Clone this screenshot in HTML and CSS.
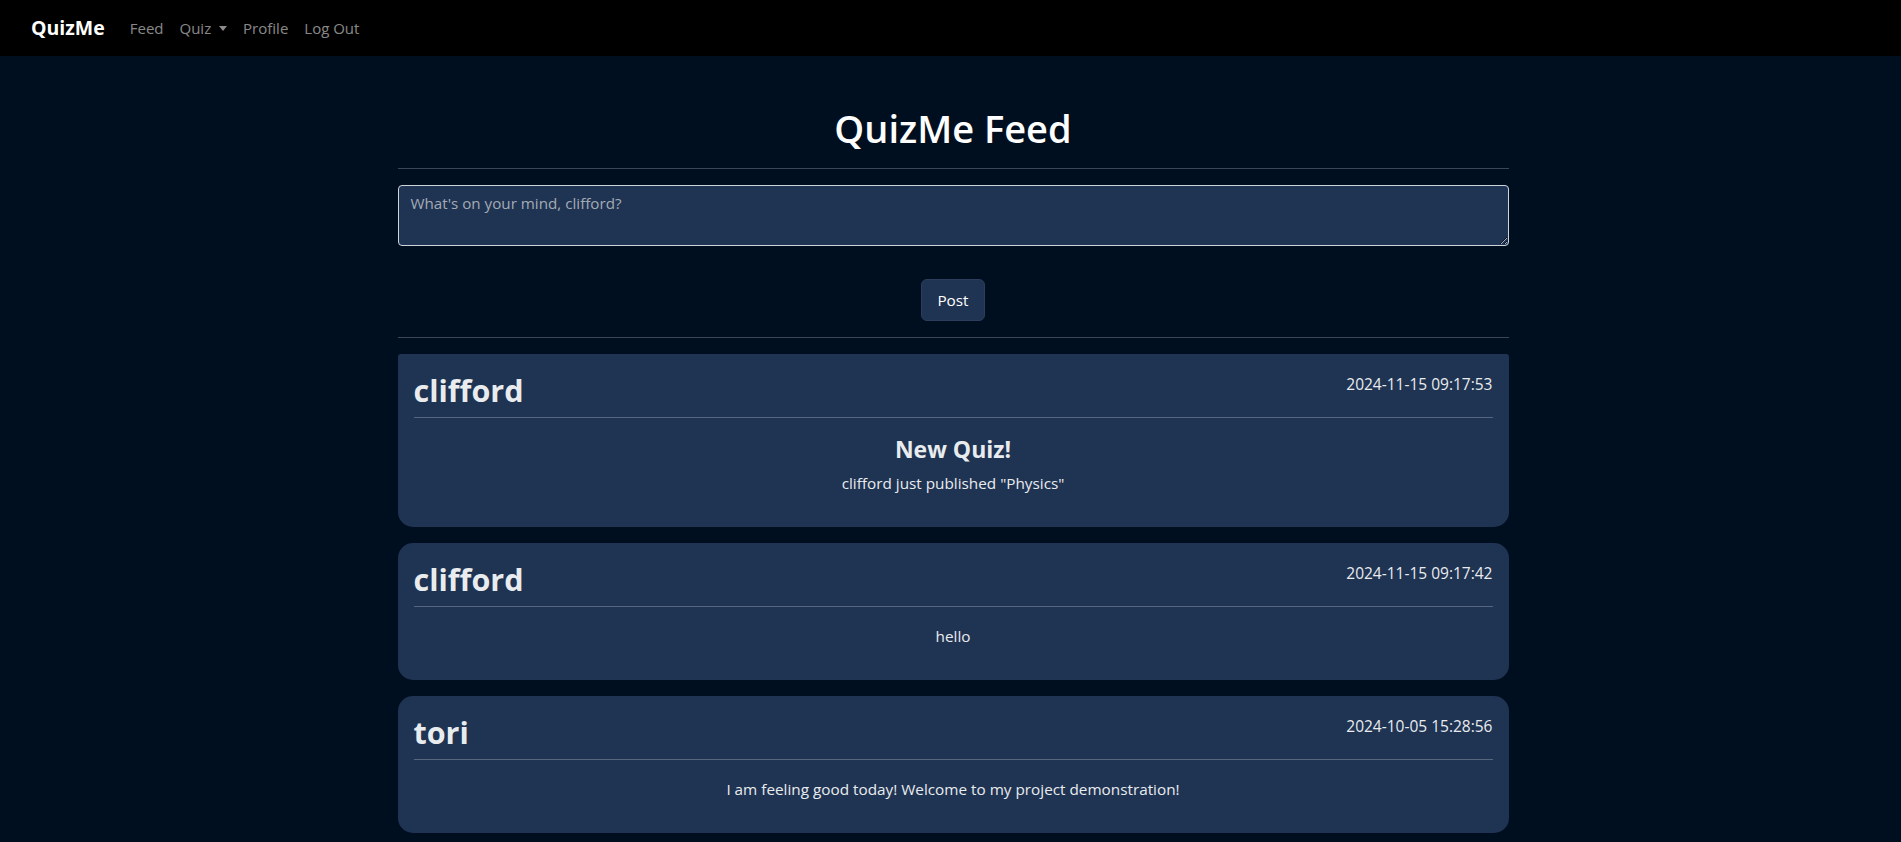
FILE: index.html
```html
<!DOCTYPE html>
<html lang="en">
<head>
<meta charset="utf-8">
<title>QuizMe Feed</title>
<link rel="stylesheet" href="styles.css">
</head>
<body>
<nav class="navbar">
  <a class="brand" href="#">QuizMe</a>
  <ul class="nav">
    <li><a class="nav-link" href="#">Feed</a></li>
    <li><a class="nav-link dropdown" href="#">Quiz <span class="caret"></span></a></li>
    <li><a class="nav-link" href="#">Profile</a></li>
    <li><a class="nav-link" href="#">Log Out</a></li>
  </ul>
</nav>
<main class="container">
  <h1 class="title">QuizMe Feed</h1>
  <hr class="rule">
  <form class="post-form">
    <textarea class="composer" rows="2" placeholder="What's on your mind, clifford?"></textarea>
    <div class="actions"><button type="button" class="btn">Post</button></div>
  </form>
  <hr class="rule">
  <section class="feed">
    <article class="card first">
      <header class="card-head">
        <h2 class="author">clifford</h2>
        <span class="date">2024-11-15 09:17:53</span>
      </header>
      <hr class="card-rule">
      <div class="card-body">
        <h3 class="headline">New Quiz!</h3>
        <p class="text">clifford just published "Physics"</p>
      </div>
    </article>
    <article class="card">
      <header class="card-head">
        <h2 class="author">clifford</h2>
        <span class="date">2024-11-15 09:17:42</span>
      </header>
      <hr class="card-rule">
      <div class="card-body">
        <p class="text">hello</p>
      </div>
    </article>
    <article class="card">
      <header class="card-head">
        <h2 class="author">tori</h2>
        <span class="date">2024-10-05 15:28:56</span>
      </header>
      <hr class="card-rule">
      <div class="card-body">
        <p class="text">I am feeling good today! Welcome to my project demonstration!</p>
      </div>
    </article>
  </section>
</main>
</body>
</html>
```
FILE: styles.css
```css
* { box-sizing: border-box; }
html, body { margin: 0; padding: 0; }
body {
  background: #000f20;
  color: #e9ecef;
  font-family: "Segoe UI", "Open Sans", "Noto Sans", sans-serif;
  font-size: 15.3px;
  line-height: 1.5;
  min-height: 842px;
}
.navbar {
  background: #000;
  height: 56px;
  display: flex;
  align-items: center;
  padding: 0 31px;
}
.brand {
  color: #fff;
  font-weight: 700;
  font-size: 19.5px;
  text-decoration: none;
  margin-right: 17px;
  line-height: 30px;
}
.nav { list-style: none; margin: 0; padding: 0; display: flex; }
.nav-link {
  display: block;
  color: rgba(255,255,255,.55);
  text-decoration: none;
  padding: 8px 8px;
  font-size: 15px;
}
.caret {
  display: inline-block;
  width: 0; height: 0;
  margin-left: 4px;
  vertical-align: 3px;
  border-top: 5px solid currentColor;
  border-left: 4px solid transparent;
  border-right: 4px solid transparent;
}
.container {
  width: 1140px;
  margin: 0 auto;
  padding: 49px 12px 0 17px;
}
.title {
  margin: 0;
  text-align: center;
  font-size: 38px;
  font-weight: 600;
  line-height: 47px;
  color: #fff;
}
.rule {
  margin: 16px 0;
  border: 0;
  border-top: 1px solid #3b4756;
}
.post-form { margin: 0; }
.composer {
  display: block;
  width: 100%;
  height: 61px;
  padding: 6px 12px;
  background: #1f3352;
  color: #e9ecef;
  border: 1px solid #cfd4da;
  border-radius: 4px;
  font-family: inherit;
  font-size: 15.2px;
  line-height: 1.55;
}
.composer::placeholder { color: #a3abb5; }
.actions {
  display: flex;
  justify-content: center;
  padding-top: 33px;
}
.btn {
  background: #1f3352;
  color: #fff;
  border: 1px solid #2c3e5c;
  border-radius: 6px;
  padding: 8px 15px;
  font-family: inherit;
  font-size: 15.3px;
  line-height: 24px;
}
.feed { display: flex; flex-direction: column; gap: 16px; }
.card {
  background: #1f3352;
  border-radius: 15px;
  padding: 17px 16px 32px;
}
.card.first { border-radius: 3px 3px 15px 15px; }
.card-head {
  display: flex;
  justify-content: space-between;
  align-items: flex-start;
}
.author {
  margin: 0;
  font-size: 30.5px;
  font-weight: 700;
  line-height: 39px;
  color: #e9ecef;
}
.date {
  font-size: 15.5px;
  line-height: 24px;
  color: #e9ecef;
  padding-top: 1px;
}
.card-rule {
  margin: 7px 0 17px;
  border: 0;
  border-top: 1px solid #56677d;
}
.card-body { text-align: center; }
.headline {
  margin: 0 0 7px;
  font-size: 23px;
  font-weight: 700;
  line-height: 29px;
}
.text { margin: 0; font-size: 15.3px; line-height: 24px; }
```
